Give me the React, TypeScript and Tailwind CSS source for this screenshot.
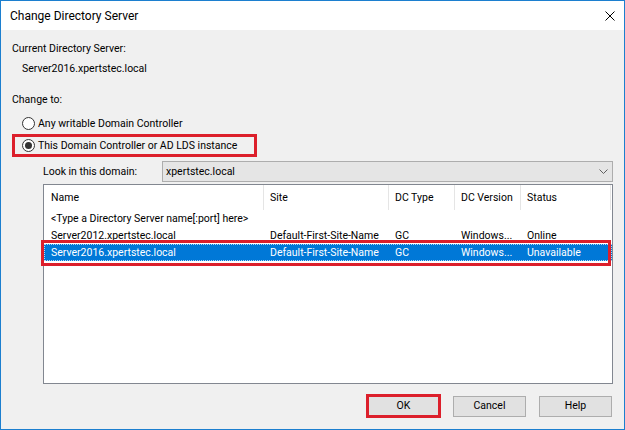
import React from 'react';

type Row = { name: string; site: string; type: string; version: string; status: string; selected?: boolean };

const rows: Row[] = [
  { name: '<Type a Directory Server name[:port] here>', site: '', type: '', version: '', status: '' },
  { name: 'Server2012.xpertstec.local', site: 'Default-First-Site-Name', type: 'GC', version: 'Windows...', status: 'Online' },
  { name: 'Server2016.xpertstec.local', site: 'Default-First-Site-Name', type: 'GC', version: 'Windows...', status: 'Unavailable', selected: true },
];

function Radio({ checked, label }: { checked?: boolean; label: string }) {
  return (
    <div className="flex items-center gap-[3px] h-[17px]">
      <span className="w-[13px] h-[13px] rounded-full border border-[#333333] bg-white flex items-center justify-center">
        {checked && <span className="w-[7px] h-[7px] rounded-full bg-[#333333]" />}
      </span>
      <span>{label}</span>
    </div>
  );
}

export default function App() {
  return (
    <div className="w-[625px] h-[430px] border border-[#1c7fcf] bg-[#f0f0f0] flex flex-col text-black font-[family-name:Roboto,sans-serif]">
      {/* title bar */}
      <div className="h-[29px] bg-white flex items-center justify-between pl-[9px] pr-[9px] text-[12px]">
        <span>Change Directory Server</span>
        <svg width="10" height="10" viewBox="0 0 10 10">
          <path d="M0.5 0.5 L9.5 9.5 M9.5 0.5 L0.5 9.5" stroke="#000" strokeWidth="1" />
        </svg>
      </div>

      {/* body */}
      <div className="flex flex-col pl-[11px] pt-[11px] text-[10.5px]">
        <div className="h-4 flex items-center">Current Directory Server:</div>
        <div className="h-4 mt-1 pl-[10px] flex items-center">Server2016.xpertstec.local</div>
        <div className="h-4 mt-[15px] flex items-center">Change to:</div>

        <div className="mt-[7px] pl-[10px]">
          <Radio label="Any writable Domain Controller" />
        </div>
        <div className="mt-[2px] w-[245px] h-[23px] border-[3px] border-[#dc1f2b] pl-[7px] flex items-center">
          <Radio checked label="This Domain Controller or AD LDS instance" />
        </div>

        {/* domain combo */}
        <div className="mt-1 ml-[31px] flex items-center h-[21px]">
          <span className="w-[119px]">Look in this domain:</span>
          <div className="w-[451px] h-[21px] bg-[#e5e5e5] border border-[#adadad] flex items-center justify-between pl-[3px] pr-[4px]">
            <span>xpertstec.local</span>
            <svg width="9" height="5" viewBox="0 0 9 5">
              <path d="M0.5 0.5 L4.5 4.5 L8.5 0.5" fill="none" stroke="#606060" strokeWidth="1" />
            </svg>
          </div>
        </div>

        {/* server list */}
        <div className="relative mt-[2px] ml-[31px] w-[570px] h-[200px] bg-white border border-[#828790]">
          <div className="grid grid-cols-[220px_125px_66px_66px_90px] h-[25px]">
            <div className="pl-[7px] flex items-center border-r border-[#e5e5e5]">Name</div>
            <div className="pl-[6px] flex items-center border-r border-[#e5e5e5]">Site</div>
            <div className="pl-[6px] flex items-center border-r border-[#e5e5e5]">DC Type</div>
            <div className="pl-[6px] flex items-center border-r border-[#e5e5e5]">DC Version</div>
            <div className="pl-[6px] flex items-center border-r border-[#e5e5e5]">Status</div>
          </div>
          {rows.map((r) => (
            <div
              key={r.name}
              className={
                r.selected
                  ? 'grid grid-cols-[220px_125px_66px_66px_90px] h-[17px] items-center whitespace-nowrap bg-[#0078d7] text-white outline-1 outline-dotted outline-white/70 -outline-offset-1 w-[568px]'
                  : 'grid grid-cols-[220px_125px_66px_66px_90px] h-[17px] items-center whitespace-nowrap'
              }
            >
              <span className="pl-[7px]">{r.name}</span>
              <span className="pl-[6px]">{r.site}</span>
              <span className="pl-[6px]">{r.type}</span>
              <span className="pl-[6px]">{r.version}</span>
              <span className="pl-[6px]">{r.status}</span>
            </div>
          ))}
          {/* highlight around selected row */}
          <div className="absolute left-[-3px] top-[55px] w-[570px] h-[26px] border-[3px] border-[#dc1f2b]" />
        </div>

        {/* buttons */}
        <div className="mt-[10px] w-[600px] h-[24px] flex items-center justify-end">
          <div className="w-[75px] h-[24px] border-[3px] border-[#dc1f2b] bg-[#e1e1e1] flex items-center justify-center">
            OK
          </div>
          <div className="ml-[12px] w-[73px] h-[21px] border border-[#adadad] bg-[#e1e1e1] flex items-center justify-center">
            Cancel
          </div>
          <div className="ml-[13px] w-[73px] h-[21px] border border-[#adadad] bg-[#e1e1e1] flex items-center justify-center">
            Help
          </div>
        </div>
      </div>
    </div>
  );
}
